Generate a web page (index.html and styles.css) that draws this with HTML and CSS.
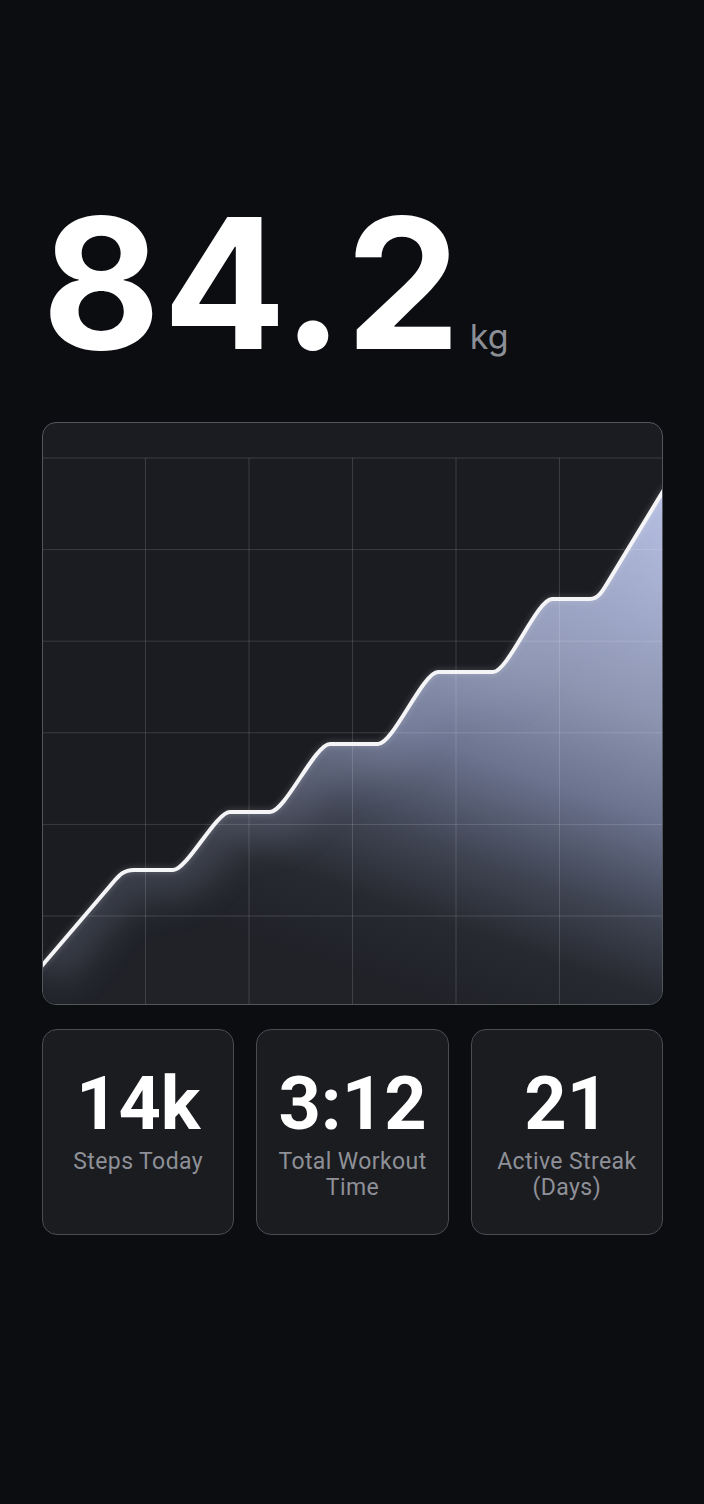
FILE: index.html
```html
<!DOCTYPE html>
<html lang="en">
<head>
    <meta charset="UTF-8">
    <title>Weight</title>
    <link rel="stylesheet" href="styles.css">
</head>
<body>
<div class="page">
    <div class="weight">
        <span class="weight-value">84.2</span>
        <span class="weight-unit">kg</span>
    </div>

    <div class="chart">
        <svg viewBox="1 1 619 581" preserveAspectRatio="none">
            <defs>
                <linearGradient id="areaFill" gradientUnits="userSpaceOnUse" x1="600" y1="70" x2="420" y2="590">
                    <stop offset="0" stop-color="#bcc5ea"/>
                    <stop offset="0.38" stop-color="#8c94b0"/>
                    <stop offset="0.55" stop-color="#6c7490"/>
                    <stop offset="0.73" stop-color="#3f4452"/>
                    <stop offset="0.86" stop-color="#272930"/>
                    <stop offset="1" stop-color="#202228"/>
                </linearGradient>
                <clipPath id="areaClip">
                    <path d="M1 543 L68 464 C76 455 80 448 92 448 L131 448 C145 448 174 390 188 390 L228 390 C243 390 273 322 288 322 L336 322 C351 322 381 250 396 250 L451 250 C466 250 495 177 510 177 L548 177 C556 177 560 170 566 160 L621 68 L621 583 L0 583 Z"/>
                </clipPath>
                <filter id="soft" x="-20%" y="-20%" width="140%" height="140%">
                    <feGaussianBlur stdDeviation="18"/>
                </filter>
            </defs>
            <!-- area under line -->
            <path class="area" d="M1 543 L68 464 C76 455 80 448 92 448 L131 448 C145 448 174 390 188 390 L228 390 C243 390 273 322 288 322 L336 322 C351 322 381 250 396 250 L451 250 C466 250 495 177 510 177 L548 177 C556 177 560 170 566 160 L621 68 L621 583 L0 583 Z"/>
            <g clip-path="url(#areaClip)">
                <path class="glow" d="M-2 546 L68 464 C76 455 80 448 92 448 L131 448 C145 448 174 390 188 390 L228 390 C243 390 273 322 288 322 L336 322 C351 322 381 250 396 250 L451 250 C466 250 495 177 510 177 L548 177 C556 177 560 170 566 160 L623 66" filter="url(#soft)"/>
            </g>
            <!-- grid -->
            <g class="grid">
                <line x1="0" y1="36" x2="621" y2="36"/>
                <line x1="0" y1="127.6" x2="621" y2="127.6"/>
                <line x1="0" y1="219.2" x2="621" y2="219.2"/>
                <line x1="0" y1="310.8" x2="621" y2="310.8"/>
                <line x1="0" y1="402.4" x2="621" y2="402.4"/>
                <line x1="0" y1="494" x2="621" y2="494"/>
                <line x1="103.5" y1="36" x2="103.5" y2="583"/>
                <line x1="207" y1="36" x2="207" y2="583"/>
                <line x1="310.5" y1="36" x2="310.5" y2="583"/>
                <line x1="414" y1="36" x2="414" y2="583"/>
                <line x1="517.5" y1="36" x2="517.5" y2="583"/>
            </g>
            <path class="trend" d="M-2 546 L68 464 C76 455 80 448 92 448 L131 448 C145 448 174 390 188 390 L228 390 C243 390 273 322 288 322 L336 322 C351 322 381 250 396 250 L451 250 C466 250 495 177 510 177 L548 177 C556 177 560 170 566 160 L623 66"/>
        </svg>
    </div>

    <div class="stats">
        <div class="stat">
            <div class="stat-value">14k</div>
            <div class="stat-label">Steps Today</div>
        </div>
        <div class="stat">
            <div class="stat-value">3:12</div>
            <div class="stat-label">Total Workout<br>Time</div>
        </div>
        <div class="stat">
            <div class="stat-value">21</div>
            <div class="stat-label">Active Streak<br>(Days)</div>
        </div>
    </div>
</div>
</body>
</html>
```

FILE: styles.css
```css
* {
    margin: 0;
    padding: 0;
    box-sizing: border-box;
}

body {
    background: #0b0d11;
    font-family: "Inter", "Roboto", sans-serif;
    color: #fff;
}

.page {
    padding: 192px 41px 0 42px;
}

/* big weight number */
.weight {
    display: flex;
    align-items: baseline;
}

.weight-value {
    font-family: "Inter", sans-serif;
    font-weight: 700;
    font-size: 182px;
    line-height: 1;
    letter-spacing: 2.5px;
}

.weight-unit {
    margin-left: 7px;
    font-family: "Inter", sans-serif;
    font-size: 34px;
    color: #8d8f96;
}

/* chart card */
.chart {
    margin-top: 48px;
    height: 583px;
    background: #1a1c21;
    border: 1px solid #53565d;
    border-radius: 14px;
    overflow: hidden;
}

.chart svg {
    display: block;
    width: 100%;
    height: 100%;
}

.chart .area {
    fill: url(#areaFill);
}

.chart .glow {
    fill: none;
    stroke: #9aa2c0;
    stroke-width: 60;
    opacity: 0.22;
}

.chart .grid line {
    stroke: rgba(255, 255, 255, 0.14);
    stroke-width: 1;
}

.chart .trend {
    fill: none;
    stroke: #f5f5f7;
    stroke-width: 4;
    stroke-linejoin: round;
    stroke-linecap: round;
    filter: drop-shadow(0 0 3px rgba(255, 255, 255, 0.25));
}

/* stats row */
.stats {
    display: grid;
    grid-template-columns: repeat(3, 1fr);
    gap: 22px;
    margin-top: 24px;
}

.stat {
    height: 206px;
    padding-top: 37px;
    background: #1b1c20;
    border: 1px solid #4a4c52;
    border-radius: 15px;
    text-align: center;
}

.stat-value {
    font-family: "Roboto", sans-serif;
    font-weight: 700;
    font-size: 74px;
    line-height: 1;
}

.stat-label {
    margin-top: 8px;
    font-family: "Roboto", sans-serif;
    font-size: 23px;
    line-height: 26px;
    letter-spacing: 0.4px;
    color: #8e9097;
}
```
